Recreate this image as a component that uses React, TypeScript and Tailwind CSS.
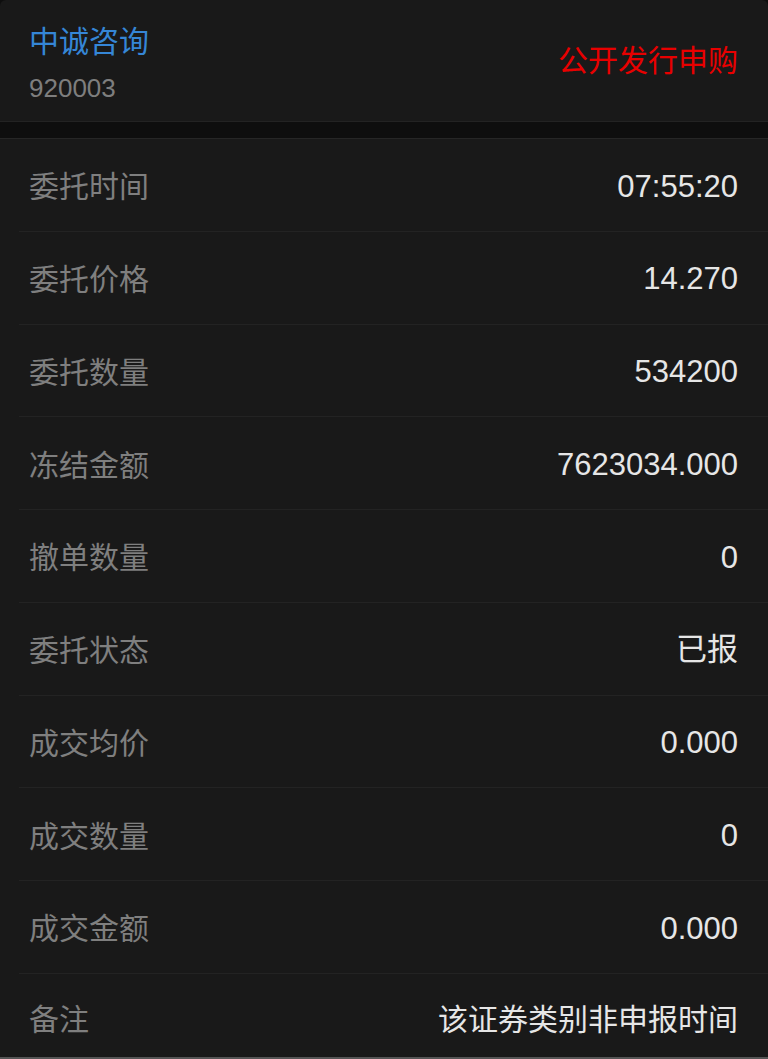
const rows: [string, string][] = [
  ["委托时间", "07:55:20"],
  ["委托价格", "14.270"],
  ["委托数量", "534200"],
  ["冻结金额", "7623034.000"],
  ["撤单数量", "0"],
  ["委托状态", "已报"],
  ["成交均价", "0.000"],
  ["成交数量", "0"],
  ["成交金额", "0.000"],
  ["备注", "该证券类别非申报时间"],
];

const font = { fontFamily: '"Liberation Sans", "Noto Sans CJK SC", sans-serif' };

export default function App() {
  return (
    <div className="w-[768px] h-[1059px] bg-[#0e0e0e] overflow-hidden" style={font}>
      {/* Header */}
      <div className="h-[122px] bg-[#191919] rounded-t-[6px] border-b border-[#232323] flex justify-between pl-[29px] pr-[30px]">
        <div className="flex flex-col pt-[24px]">
          <span className="text-[30px] leading-[36px] text-[#3586d6]">中诚咨询</span>
          <span className="text-[26px] leading-[30px] text-[#7e7e7e] mt-[13px]">920003</span>
        </div>
        <span className="self-center text-[30px] leading-[36px] text-[#e80000]">公开发行申购</span>
      </div>

      {/* Gap */}
      <div className="h-[17px] bg-[#0e0e0e] border-b border-[#262626]" />

      {/* Detail rows */}
      <div className="bg-[#191919]">
        {rows.map(([label, value], i) =>
          i === rows.length - 1 ? (
            <div
              key={label}
              className="h-[85px] flex items-center justify-between pl-[29px] pr-[30px] pt-[8px] border-b-2 border-[#555555]"
            >
              <span className="text-[30px] text-[#7f7f7f]">{label}</span>
              <span className="text-[30px] text-[#e6e6e6]">{value}</span>
            </div>
          ) : (
            <div key={label} className="pl-[19px]">
              <div className="h-[92.75px] flex items-center justify-between pl-[10px] pr-[30px] pt-[4px] border-b border-[#232323]">
                <span className="text-[30px] text-[#7f7f7f]">{label}</span>
                <span className="text-[31px] text-[#e6e6e6]">{value}</span>
              </div>
            </div>
          )
        )}
      </div>
    </div>
  );
}
